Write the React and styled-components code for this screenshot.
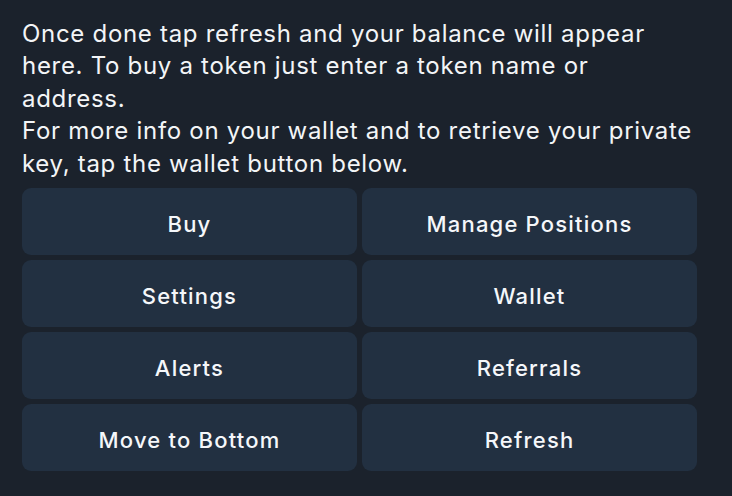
import styled, { createGlobalStyle } from "styled-components"

const Global = createGlobalStyle`
  html, body {
    margin: 0;
    padding: 0;
    background: #1b222c;
  }
  body {
    font-family: Inter, "Open Sans", "Liberation Sans", sans-serif;
    -webkit-font-smoothing: antialiased;
  }
`

const Page = styled.div`
  width: 732px;
  height: 496px;
  box-sizing: border-box;
  padding: 17.5px 35px 0 22px;
  background: #1b222c;
  overflow: hidden;
`

const Message = styled.div`
  color: #f3f5f7;
  font-size: 24px;
  line-height: 32.5px;
  letter-spacing: 0.7px;
  margin-bottom: 8px;
`

const Keyboard = styled.div`
  display: grid;
  grid-template-columns: 1fr 1fr;
  grid-auto-rows: 67px;
  gap: 5px;
`

const Key = styled.button`
  border: none;
  border-radius: 9px;
  background: #223041;
  color: #f5f7fa;
  font-family: inherit;
  font-size: 22px;
  font-weight: 550;
  letter-spacing: 1.2px;
  display: flex;
  align-items: center;
  justify-content: center;
  padding: 4px 0 0;
`

const keys = [
  "Buy",
  "Manage Positions",
  "Settings",
  "Wallet",
  "Alerts",
  "Referrals",
  "Move to Bottom",
  "Refresh",
]

export default function App() {
  return (
    <>
      <Global />
      <Page>
        <Message>
          Once done tap refresh and your balance will appear here. To buy a token just enter a token name or address.
          <br />
          For more info on your wallet and to retrieve your private key, tap the wallet button below.
        </Message>
        <Keyboard>
          {keys.map((k) => (
            <Key key={k}>{k}</Key>
          ))}
        </Keyboard>
      </Page>
    </>
  )
}
